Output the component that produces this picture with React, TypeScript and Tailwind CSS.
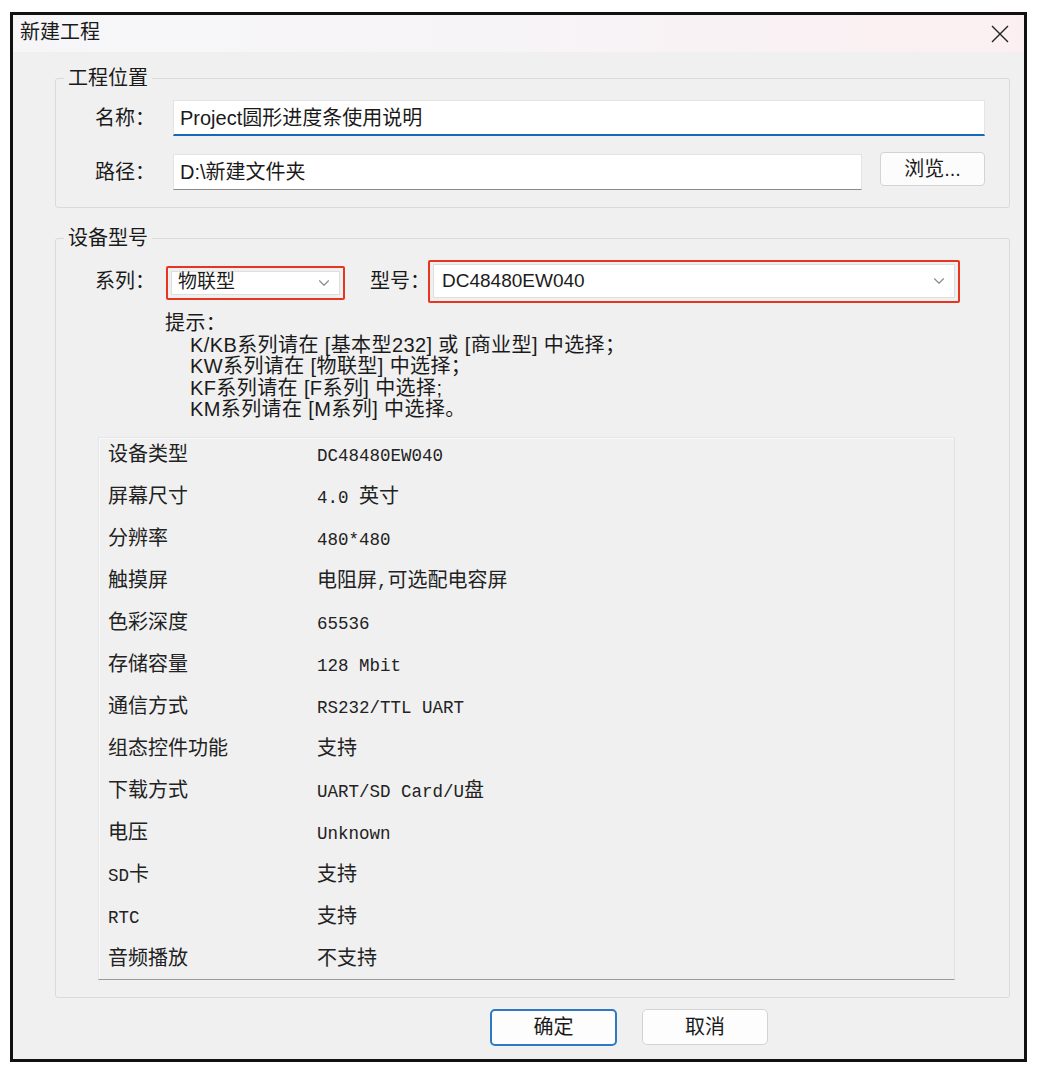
import { ChevronDown } from "lucide-react";

const specs: [string, string][] = [
  ["设备类型", "DC48480EW040"],
  ["屏幕尺寸", "4.0 英寸"],
  ["分辨率", "480*480"],
  ["触摸屏", "电阻屏,可选配电容屏"],
  ["色彩深度", "65536"],
  ["存储容量", "128 Mbit"],
  ["通信方式", "RS232/TTL UART"],
  ["组态控件功能", "支持"],
  ["下载方式", "UART/SD Card/U盘"],
  ["电压", "Unknown"],
  ["SD卡", "支持"],
  ["RTC", "支持"],
  ["音频播放", "不支持"],
];

const hints = [
  "K/KB系列请在 [基本型232] 或 [商业型] 中选择；",
  "KW系列请在 [物联型] 中选择；",
  "KF系列请在 [F系列] 中选择;",
  "KM系列请在 [M系列] 中选择。",
];

// ascii runs get the fixed-width font, the rest stays in the cjk face
const Mixed = ({ text }: { text: string }) => (
  <>
    {text.split(/([\x20-\x7e]+)/).map((part, i) =>
      /^[\x20-\x7e]+$/.test(part) ? (
        <span
          key={i}
          className="whitespace-pre font-['Liberation_Mono',monospace] text-[17.5px]"
        >
          {part}
        </span>
      ) : (
        <span key={i}>{part}</span>
      ),
    )}
  </>
);

const App = () => {
  return (
    <div className="min-h-[1074px] w-[1038px] bg-white pl-[10px] pt-[12px] font-['Liberation_Sans','Noto_Sans_CJK_SC',sans-serif] text-[#1a1a1a]">
      <div className="flex h-[1050px] w-[1017px] flex-col border-[3px] border-[#111] bg-[#f0f0f0]">
        {/* title bar */}
        <div className="flex h-[37px] items-center justify-between bg-gradient-to-r from-[#f6f6f9] via-[#f7f4f7] to-[#fbeff1] pl-[7px] pr-[14px]">
          <span className="-translate-y-[2px] text-[20px] leading-none">新建工程</span>
          <svg width="20" height="20" viewBox="0 0 20 20" className="text-[#222]">
            <path d="M2 2 L18 18 M18 2 L2 18" stroke="currentColor" strokeWidth="1.4" fill="none" />
          </svg>
        </div>

        {/* 工程位置 */}
        <fieldset className="ml-[42px] mr-[14px] mt-[12px] rounded-[3px] border border-[#dadada] pb-[17px]">
          <legend className="ml-[8px] px-[4px] text-[20px] leading-[28px]">工程位置</legend>
          <div className="flex flex-col gap-[18px] pl-[39px] pr-[24px] pt-[8px]">
            <div className="flex h-[36px] items-center">
              <span className="w-[78px] text-[20px]">名称：</span>
              <div className="flex h-[36px] flex-1 items-center border border-b-2 border-[#e4e4e4] border-b-[#1668b8] bg-white pl-[6px]">
                <span className="text-[20px]">Project圆形进度条使用说明</span>
              </div>
            </div>
            <div className="flex h-[36px] items-center">
              <span className="w-[78px] text-[20px]">路径：</span>
              <div className="flex h-[36px] w-[689px] items-center border border-[#e4e4e4] border-b-[#8a8a8a] bg-white pl-[6px]">
                <span className="text-[20px]">D:\新建文件夹</span>
              </div>
              <button className="ml-auto flex h-[34px] w-[105px] -translate-y-[3px] items-center justify-center rounded-[4px] border border-[#d3d3d3] bg-[#fcfcfc] text-[20px]">
                浏览...
              </button>
            </div>
          </div>
        </fieldset>

        {/* 设备型号 */}
        <fieldset className="ml-[42px] mr-[14px] mt-[16px] rounded-[3px] border border-[#dadada] pb-[17px]">
          <legend className="ml-[8px] px-[4px] text-[20px] leading-[28px]">设备型号</legend>
          <div className="mt-[5px] flex h-[44px] items-center pl-[39px] pt-[4px]">
            <span className="w-[71px] text-[20px]">系列：</span>
            <div className="mt-[3px] w-[179px] rounded-[2px] border-2 border-[#e8351f] p-[3px]">
              <div className="flex h-[24px] items-center justify-between border border-[#dedede] bg-white pl-[6px] pr-[6px]">
                <span className="text-[19px] text-[#1b1b1b]">物联型</span>
                <ChevronDown className="h-[18px] w-[18px] text-[#8a8a8a]" strokeWidth={1.5} />
              </div>
            </div>
            <span className="ml-[25px] w-[58px] whitespace-nowrap text-[20px]">型号：</span>
            <div className="flex h-[43px] w-[532px] items-center rounded-[2px] border-2 border-[#e8351f] p-[3px]">
              <div className="flex h-[34px] w-full items-center justify-between border border-[#dedede] bg-white pl-[8px] pr-[6px]">
                <span className="text-[19px] text-[#1b1b1b]">DC48480EW040</span>
                <ChevronDown className="h-[18px] w-[18px] text-[#8a8a8a]" strokeWidth={1.5} />
              </div>
            </div>
          </div>

          <div className="pl-[109px] pt-[12px] text-[20px] leading-[21.5px] tracking-[0.4px]">
            <div>提示：</div>
            <div className="pl-[25px]">
              {hints.map((h) => (
                <div key={h}>{h}</div>
              ))}
            </div>
          </div>

          <div className="ml-[42px] mr-[54px] mt-[16px] h-[543px] overflow-hidden border border-[#e6e6e6] border-b-[#9a9a9a] border-r-[#e2e2e2] shadow-[inset_1px_1px_0_#fafafa]">
            {specs.map(([k, v]) => (
              <div key={k} className="flex h-[42px] items-start pt-[3px] text-[20px] leading-[26px] text-[#222]">
                <span className="w-[218px] pl-[9px]">
                  <Mixed text={k} />
                </span>
                <span>
                  <Mixed text={v} />
                </span>
              </div>
            ))}
          </div>
        </fieldset>

        {/* buttons */}
        <div className="flex gap-[25px] pl-[477px] pt-[11px]">
          <button className="flex h-[37px] w-[127px] items-center justify-center rounded-[5px] border-2 border-[#2f78c4] bg-[#fdfdfd] text-[20px]">
            确定
          </button>
          <button className="flex h-[36px] w-[126px] items-center justify-center rounded-[5px] border border-[#d3d3d3] bg-[#fdfdfd] text-[20px]">
            取消
          </button>
        </div>
      </div>
    </div>
  );
};

export default App;
